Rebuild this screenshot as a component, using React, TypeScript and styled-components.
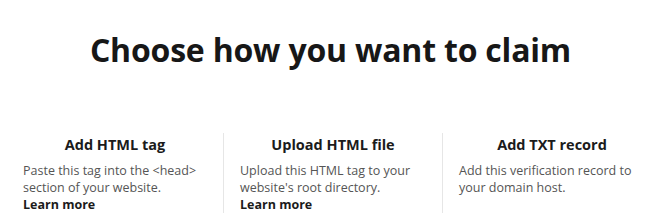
import React from "react";
import styled, { createGlobalStyle } from "styled-components";

const GlobalStyle = createGlobalStyle`
  html, body {
    margin: 0;
    padding: 0;
    background: #ffffff;
  }
  body {
    font-family: "Open Sans", "Noto Sans", "Liberation Sans", sans-serif;
    color: #1b1b1b;
  }
`;

const Page = styled.div`
  width: 661px;
  height: 213px;
  overflow: hidden;
  box-sizing: border-box;
  padding: 30px 0 0 6px;
`;

const Title = styled.h1`
  margin: 0 0 0 -6px;
  text-align: center;
  font-size: 32px;
  line-height: 40px;
  font-weight: 700;
  color: #171717;
  letter-spacing: -0.2px;
`;

const Options = styled.div`
  display: grid;
  grid-template-columns: 217px 219px 1fr;
  margin-top: 63px;
`;

const Option = styled.div<{ divided?: boolean }>`
  padding: 2px 16px 0;
  border-left: 1px solid ${(p) => (p.divided ? "#e6e6e6" : "transparent")};
  min-height: 90px;
`;

const OptionTitle = styled.h2`
  margin: 0 0 7px;
  text-align: center;
  font-size: 14.5px;
  line-height: 20px;
  font-weight: 700;
  color: #1b1b1b;
`;

const Description = styled.p`
  margin: 0;
  font-size: 12.5px;
  line-height: 17px;
  color: #555555;
`;

const LearnMore = styled.a`
  display: block;
  font-size: 12.5px;
  line-height: 17px;
  font-weight: 700;
  color: #1b1b1b;
  text-decoration: none;
`;

const options = [
  {
    title: "Add HTML tag",
    text: "Paste this tag into the <head> section of your website.",
    learn: true,
  },
  {
    title: "Upload HTML file",
    text: "Upload this HTML tag to your website's root directory.",
    learn: true,
  },
  {
    title: "Add TXT record",
    text: "Add this verification record to your domain host.",
    learn: false,
  },
];

export default function App() {
  return (
    <>
      <GlobalStyle />
      <Page>
        <Title>Choose how you want to claim</Title>
        <Options>
          {options.map((o, i) => (
            <Option key={o.title} divided={i > 0}>
              <OptionTitle>{o.title}</OptionTitle>
              <Description>{o.text}</Description>
              {o.learn && <LearnMore href="#">Learn more</LearnMore>}
            </Option>
          ))}
        </Options>
      </Page>
    </>
  );
}
